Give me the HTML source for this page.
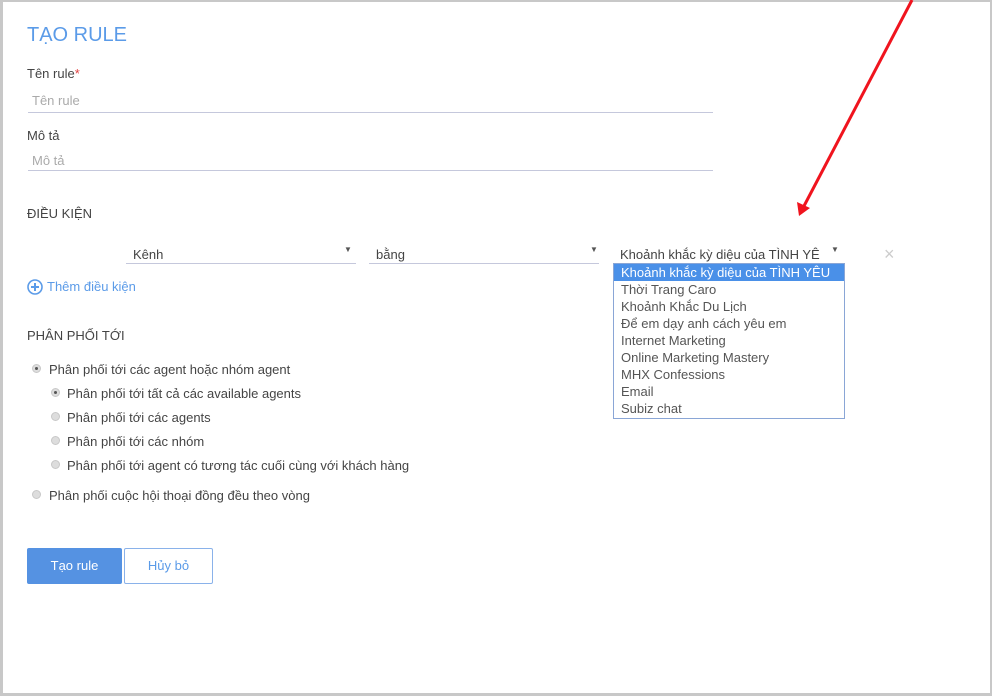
<!DOCTYPE html>
<html><head><meta charset="utf-8"><style>
*{margin:0;padding:0;box-sizing:border-box}
html,body{width:992px;height:696px;overflow:hidden;background:#fff}
body{font-family:"Liberation Sans","DejaVu Sans",sans-serif;color:#444;position:relative}
.frame{position:absolute;left:0;top:0;width:992px;height:696px;border:2px solid #c8c8c8;border-left-width:3px;border-bottom-width:3px;border-right-width:2px}
.a{position:absolute;white-space:nowrap}
.line{position:absolute;height:1px;background:#c5c8dc}
.lbl{font-size:13px;color:#444}
.ph{font-size:13px;color:#aaa}
.radio{position:absolute;width:9px;height:9px;border-radius:50%;background:#ddd;border:1px solid #c8c8c8}
.radio.on::after{content:"";position:absolute;left:2px;top:2px;width:3px;height:3px;border-radius:50%;background:#555}
.tri{position:absolute;font-size:8px;color:#555}
</style></head><body>
<div class="frame"></div>
<div class="a" style="left:27px;top:24px;font-size:20px;color:#5b9be8">TẠO RULE</div>
<div class="a lbl" style="left:27px;top:66px">Tên rule<span style="color:#e04040">*</span></div>
<div class="a ph" style="left:32px;top:93px">Tên rule</div>
<div class="line" style="left:28px;top:112px;width:685px"></div>
<div class="a lbl" style="left:27px;top:128px">Mô tả</div>
<div class="a ph" style="left:32px;top:153px">Mô tả</div>
<div class="line" style="left:28px;top:170px;width:685px"></div>
<div class="a lbl" style="left:27px;top:206px">ĐIỀU KIỆN</div>

<div class="a lbl" style="left:133px;top:247px">Kênh</div>
<div class="tri" style="left:344px;top:245px">▼</div>
<div class="line" style="left:126px;top:263px;width:230px"></div>
<div class="a lbl" style="left:376px;top:247px">bằng</div>
<div class="tri" style="left:590px;top:245px">▼</div>
<div class="line" style="left:369px;top:263px;width:230px"></div>
<div class="a lbl" style="left:620px;top:247px;width:200px;overflow:hidden">Khoảnh khắc kỳ diệu của TÌNH YÊU</div>
<div class="tri" style="left:831px;top:245px">▼</div>
<div class="a" style="left:884px;top:245px;font-size:18px;color:#ccc;line-height:18px">×</div>

<div style="position:absolute;left:613px;top:263px;width:232px;height:156px;border:1px solid #8aa6d6;background:#fff;font-size:13px;color:#555;line-height:17px">
<div style="background:#4a90e8;color:#fff;padding-left:7px;height:17px">Khoảnh khắc kỳ diệu của TÌNH YÊU</div>
<div style="padding-left:7px">Thời Trang Caro<br>Khoảnh Khắc Du Lịch<br>Để em dạy anh cách yêu em<br>Internet Marketing<br>Online Marketing Mastery<br>MHX Confessions<br>Email<br>Subiz chat</div>
</div>

<svg class="a" style="left:27px;top:279px" width="16" height="16" viewBox="0 0 16 16"><circle cx="8" cy="8" r="7" fill="none" stroke="#5b9be8" stroke-width="1.6"/><path d="M8 4v8M4 8h8" stroke="#5b9be8" stroke-width="2"/></svg>
<div class="a" style="left:47px;top:279px;font-size:13px;color:#5b9be8">Thêm điều kiện</div>

<div class="a lbl" style="left:27px;top:328px">PHÂN PHỐI TỚI</div>
<div class="radio on" style="left:32px;top:364px"></div>
<div class="a lbl" style="left:49px;top:362px">Phân phối tới các agent hoặc nhóm agent</div>
<div class="radio on" style="left:51px;top:388px"></div>
<div class="a lbl" style="left:67px;top:386px">Phân phối tới tất cả các available agents</div>
<div class="radio" style="left:51px;top:412px"></div>
<div class="a lbl" style="left:67px;top:410px">Phân phối tới các agents</div>
<div class="radio" style="left:51px;top:436px"></div>
<div class="a lbl" style="left:67px;top:434px">Phân phối tới các nhóm</div>
<div class="radio" style="left:51px;top:460px"></div>
<div class="a lbl" style="left:67px;top:458px">Phân phối tới agent có tương tác cuối cùng với khách hàng</div>
<div class="radio" style="left:32px;top:490px"></div>
<div class="a lbl" style="left:49px;top:488px">Phân phối cuộc hội thoại đồng đều theo vòng</div>

<div class="a" style="left:27px;top:548px;width:95px;height:36px;background:#5592e2;border-radius:2px;color:#fff;font-size:13px;text-align:center;line-height:36px">Tạo rule</div>
<div class="a" style="left:124px;top:548px;width:89px;height:36px;border:1px solid #8ab2ea;border-radius:2px;color:#5b9be8;font-size:13px;text-align:center;line-height:34px">Hủy bỏ</div>

<svg class="a" style="left:0;top:0" width="992" height="696"><line x1="912" y1="0" x2="804" y2="206" stroke="#f0141e" stroke-width="3"/><polygon points="799,216 797,202 810,208" fill="#f0141e"/></svg>
</body></html>
